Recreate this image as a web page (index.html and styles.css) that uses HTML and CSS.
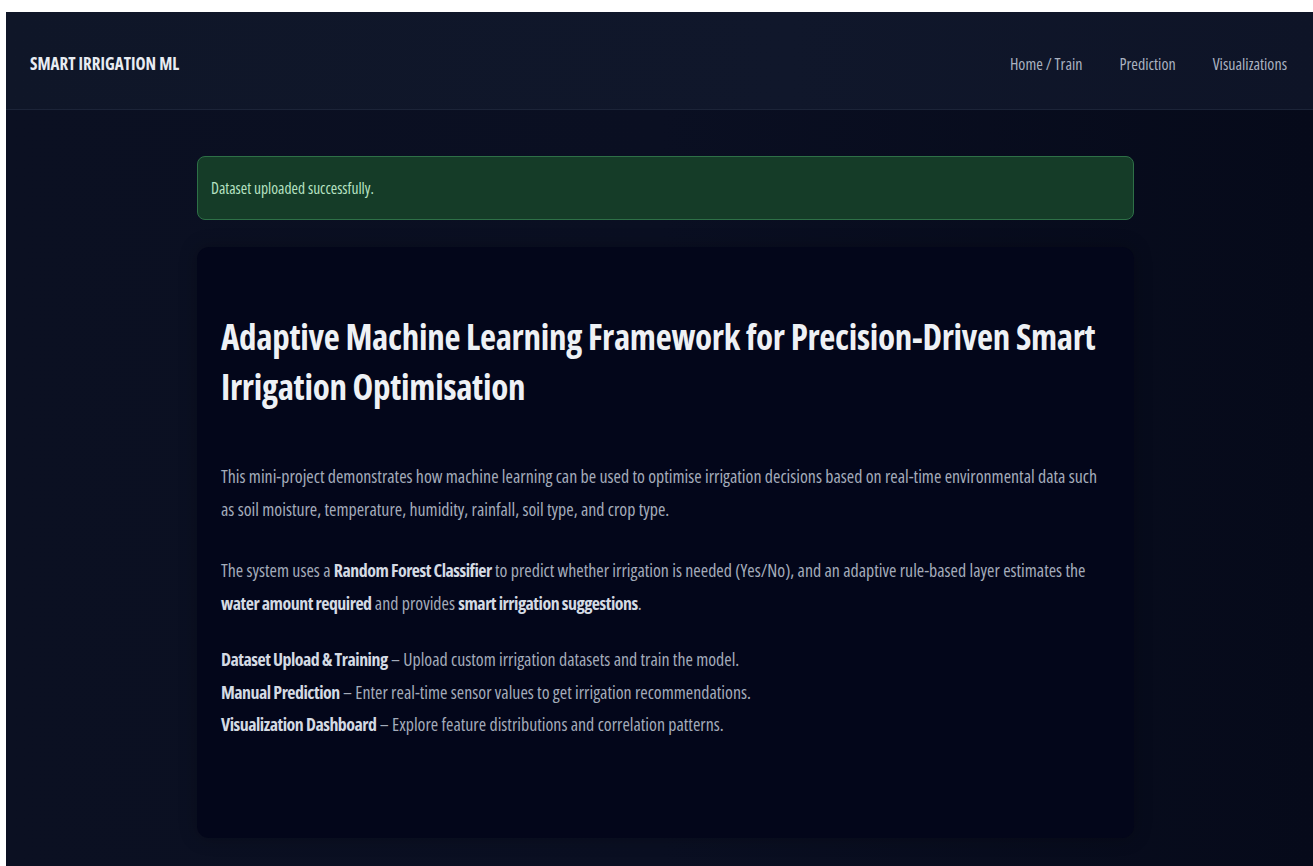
FILE: index.html
```html
<!DOCTYPE html>
<html lang="en">
<head>
<meta charset="utf-8">
<title>Smart Irrigation ML</title>
<link rel="stylesheet" href="styles.css">
</head>
<body>
<div class="app">
  <header class="navbar">
    <a class="brand" href="#">SMART IRRIGATION ML</a>
    <nav class="nav-links">
      <a href="#">Home / Train</a>
      <a href="#">Prediction</a>
      <a href="#">Visualizations</a>
    </nav>
  </header>
  <main class="main">
    <div class="container">
      <div class="alert">Dataset uploaded successfully.</div>
      <section class="card">
        <h1>Adaptive Machine Learning Framework for Precision-Driven Smart Irrigation Optimisation</h1>
        <p>This mini-project demonstrates how machine learning can be used to optimise irrigation decisions based on real-time environmental data such as soil moisture, temperature, humidity, rainfall, soil type, and crop type.</p>
        <p>The system uses a <strong>Random Forest Classifier</strong> to predict whether irrigation is needed (Yes/No), and an adaptive rule-based layer estimates the <strong>water amount required</strong> and provides <strong>smart irrigation suggestions</strong>.</p>
        <ul class="features">
          <li><strong>Dataset Upload &amp; Training</strong> – Upload custom irrigation datasets and train the model.</li>
          <li><strong>Manual Prediction</strong> – Enter real-time sensor values to get irrigation recommendations.</li>
          <li><strong>Visualization Dashboard</strong> – Explore feature distributions and correlation patterns.</li>
        </ul>
      </section>
    </div>
  </main>
</div>
</body>
</html>
```

FILE: styles.css
```css
html {
  background: #ffffff;
}

body {
  margin: 12px 0 0 6px;
  font-family: "Open Sans", "Roboto", sans-serif;
  font-stretch: 75%;
  color: #c9d0db;
}

.app {
  min-height: 854px;
  background: linear-gradient(90deg, #0b1022 0%, #0a0f22 50%, #060a1a 100%);
}

.navbar {
  height: 91px;
  display: flex;
  align-items: center;
  justify-content: space-between;
  padding: 6px 26px 0 24px;
  background: linear-gradient(90deg, #0f1628 0%, #10172b 60%, #0e1427 100%);
  border-bottom: 1px solid #1c2438;
}

.brand {
  color: #e8ecf2;
  font-weight: 700;
  font-size: 17px;
  text-decoration: none;
}

.nav-links {
  display: flex;
  gap: 37px;
}

.nav-links a {
  color: #aab2c0;
  font-size: 16px;
  text-decoration: none;
}

.main {
  padding: 46px 0 26px 12px;
}

.container {
  width: 937px;
  margin: 0 auto;
}

.alert {
  height: 62px;
  display: flex;
  align-items: center;
  padding: 0 13px;
  background: #153c28;
  border: 1px solid #2e7047;
  border-radius: 8px;
  color: #b5e2c2;
  font-size: 15.5px;
}

.card {
  margin-top: 27px;
  height: 591px;
  box-sizing: border-box;
  padding: 65px 24px 24px;
  background: #03061a;
  border-radius: 12px;
  box-shadow: 0 0 18px rgba(0, 0, 0, 0.25);
}

.card h1 {
  margin: 0 0 48px;
  font-size: 35px;
  line-height: 50px;
  font-weight: 700;
  letter-spacing: -0.3px;
  color: #eef1f5;
}

.card p {
  margin: 0 0 28px;
  font-size: 17.9px;
  line-height: 33px;
  color: #a4acba;
}

.card p + p {
  margin-bottom: 23px;
}

.card strong {
  color: #d4dae3;
  font-weight: 700;
  letter-spacing: -0.5px;
}

.features {
  list-style: none;
  margin: 0;
  padding: 0;
  font-size: 17.9px;
  line-height: 32.7px;
  color: #a4acba;
}
```
